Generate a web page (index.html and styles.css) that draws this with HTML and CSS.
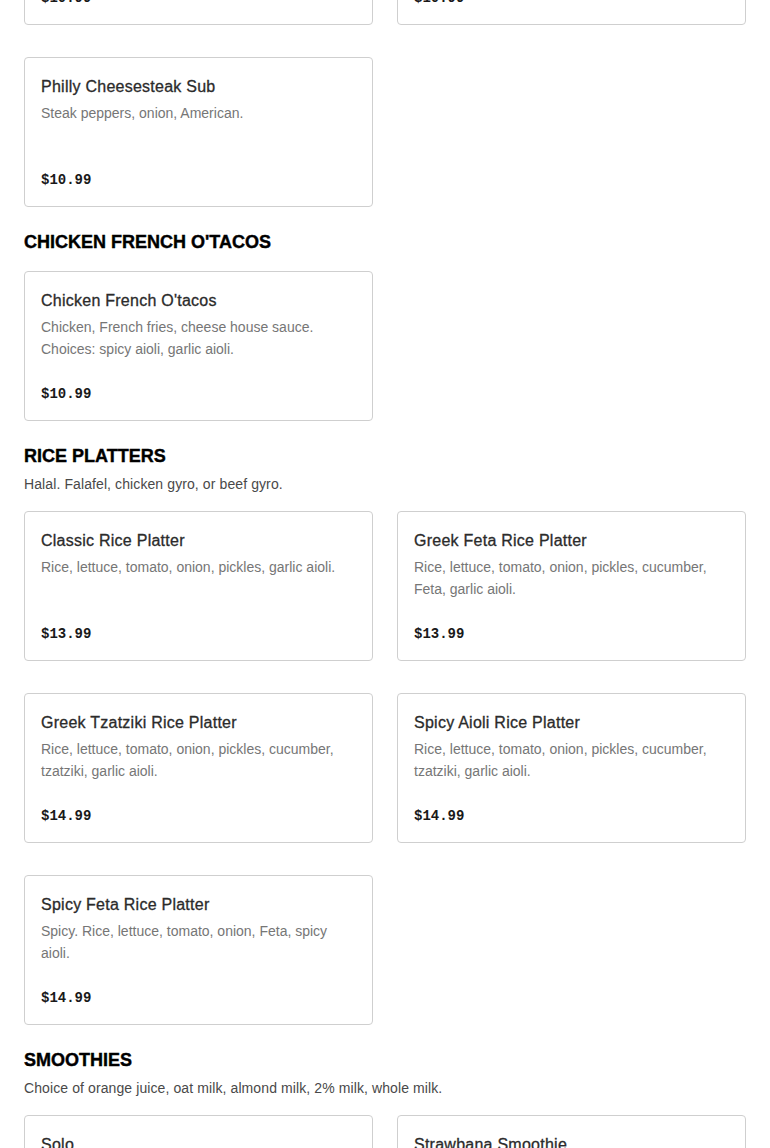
FILE: index.html
```html
<!DOCTYPE html>
<html>
<head>
<meta charset="utf-8">
<link rel="stylesheet" href="styles.css">
</head>
<body>
<main class="menu">
  <section class="section section-first">
    <div class="grid">
      <div class="card"><h3 class="item-name">Italian Sub</h3><p class="item-desc">Salami, ham, provolone.</p><span class="price">$10.99</span></div>
      <div class="card"><h3 class="item-name">Turkey Sub</h3><p class="item-desc">Turkey, lettuce, tomato.</p><span class="price">$10.99</span></div>
      <div class="card"><h3 class="item-name">Philly Cheesesteak Sub</h3><p class="item-desc">Steak peppers, onion, American.</p><span class="price">$10.99</span></div>
    </div>
  </section>

  <section class="section">
    <header class="section-head">
      <h2 class="section-title">CHICKEN FRENCH O'TACOS</h2>
    </header>
    <div class="grid">
      <div class="card"><h3 class="item-name">Chicken French O'tacos</h3><p class="item-desc">Chicken, French fries, cheese house sauce. Choices: spicy aioli, garlic aioli.</p><span class="price">$10.99</span></div>
    </div>
  </section>

  <section class="section">
    <header class="section-head">
      <h2 class="section-title">RICE PLATTERS</h2>
      <p class="section-sub">Halal. Falafel, chicken gyro, or beef gyro.</p>
    </header>
    <div class="grid">
      <div class="card"><h3 class="item-name">Classic Rice Platter</h3><p class="item-desc">Rice, lettuce, tomato, onion, pickles, garlic aioli.</p><span class="price">$13.99</span></div>
      <div class="card"><h3 class="item-name">Greek Feta Rice Platter</h3><p class="item-desc">Rice, lettuce, tomato, onion, pickles, cucumber, Feta, garlic aioli.</p><span class="price">$13.99</span></div>
      <div class="card"><h3 class="item-name">Greek Tzatziki Rice Platter</h3><p class="item-desc">Rice, lettuce, tomato, onion, pickles, cucumber, tzatziki, garlic aioli.</p><span class="price">$14.99</span></div>
      <div class="card"><h3 class="item-name">Spicy Aioli Rice Platter</h3><p class="item-desc">Rice, lettuce, tomato, onion, pickles, cucumber, tzatziki, garlic aioli.</p><span class="price">$14.99</span></div>
      <div class="card"><h3 class="item-name">Spicy Feta Rice Platter</h3><p class="item-desc">Spicy. Rice, lettuce, tomato, onion, Feta, spicy aioli.</p><span class="price">$14.99</span></div>
    </div>
  </section>

  <section class="section">
    <header class="section-head">
      <h2 class="section-title">SMOOTHIES</h2>
      <p class="section-sub">Choice of orange juice, oat milk, almond milk, 2% milk, whole milk.</p>
    </header>
    <div class="grid">
      <div class="card"><h3 class="item-name">Solo</h3><p class="item-desc">Banana, strawberry, honey.</p><span class="price">$7.99</span></div>
      <div class="card"><h3 class="item-name">Strawbana Smoothie</h3><p class="item-desc">Strawberry, banana, honey.</p><span class="price">$7.99</span></div>
    </div>
  </section>
</main>
</body>
</html>
```

FILE: styles.css
```css
html, body {
  margin: 0;
  padding: 0;
  background: #ffffff;
}

body {
  font-family: "Liberation Sans", Arial, sans-serif;
  color: #191919;
  overflow: hidden;
}

.menu {
  padding: 0 24px;
  margin-top: -125px;
}

.section {
  padding-top: 22px;
}

.section-first {
  padding-top: 0;
}

.section-head {
  margin-bottom: 16px;
}

.section-title {
  margin: 0;
  font-size: 18px;
  line-height: 26px;
  font-weight: 900;
  color: #000;
  -webkit-text-stroke: 0.4px #000;
}

.section-sub {
  margin: 4px 0 0;
  font-size: 14px;
  line-height: 22px;
  color: #494949;
  letter-spacing: 0.1px;
}

.grid {
  display: grid;
  grid-template-columns: 1fr 1fr;
  column-gap: 24px;
  row-gap: 32px;
}

.card {
  border: 1px solid #cfcfcf;
  border-radius: 4px;
  padding: 17px 16px 15px;
  display: flex;
  flex-direction: column;
}

.item-name {
  margin: 0;
  font-size: 16px;
  line-height: 24px;
  font-weight: 400;
  color: #2b2b2b;
  letter-spacing: 0.25px;
  -webkit-text-stroke: 0.3px #2b2b2b;
}

.item-desc {
  margin: 3px 0 0;
  min-height: 44px;
  font-size: 14px;
  line-height: 22px;
  color: #767676;
}

.price {
  margin-top: 23px;
  font-family: "Liberation Mono", "Courier New", monospace;
  font-weight: 700;
  font-size: 14px;
  line-height: 22px;
  color: #191919;
}
```
